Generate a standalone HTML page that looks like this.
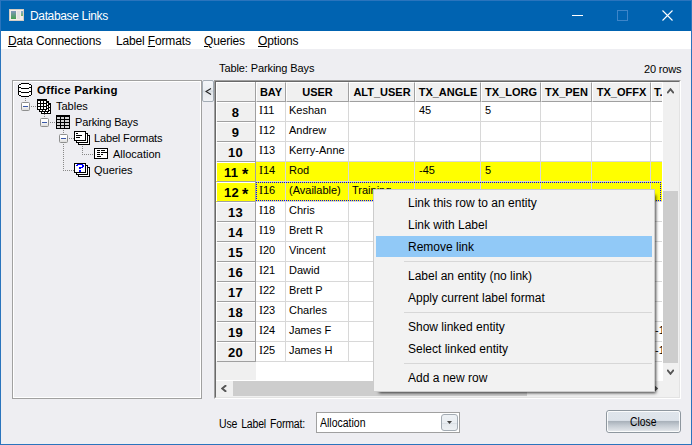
<!DOCTYPE html>
<html><head><meta charset="utf-8">
<style>
*{margin:0;padding:0;box-sizing:border-box}
html,body{width:692px;height:445px;overflow:hidden;background:#eeeef2}
body{position:relative;font-family:"Liberation Sans",sans-serif;font-size:11px;color:#000}
div,span{position:absolute;white-space:nowrap}
.t11{font-size:11px;line-height:13px}
.t12{font-size:12px;line-height:15px}
.b{font-weight:bold}
u{position:static;text-decoration:underline;text-underline-offset:1px}
</style></head><body>

<div style="left:0;top:0;width:692px;height:31px;background:#0063b1"></div>
<div style="left:9px;top:9px;width:15px;height:12px;background:#f2eee9;border:1px solid #d5cdc4"></div>
<div style="left:11px;top:11px;width:5px;height:8px;background:linear-gradient(#8197bd,#44a04f)"></div>
<div style="left:17px;top:11px;width:3px;height:8px;background:#e2e2e2"></div>
<div style="left:21px;top:11px;width:2px;height:5px;background:linear-gradient(#8aa6d6,#74b864)"></div>
<div class="t12" style="left:30px;top:9px;color:#fff;letter-spacing:-0.35px">Database Links</div>
<div style="left:572px;top:15px;width:11px;height:1px;background:#fff"></div>
<div style="left:617px;top:10px;width:11px;height:11px;border:1px solid #3d85c9"></div>
<svg style="position:absolute;left:662px;top:10px" width="11" height="11"><path d="M0.5 0.5L10.5 10.5M10.5 0.5L0.5 10.5" stroke="#fff" stroke-width="1.1"/></svg>
<div style="left:1px;top:31px;width:690px;height:18px;background:#fff"></div>
<div class="t12" style="left:8px;top:34px;letter-spacing:-0.15px"><u>D</u>ata Connections</div>
<div class="t12" style="left:116px;top:34px;letter-spacing:-0.15px">Label <u>F</u>ormats</div>
<div class="t12" style="left:204px;top:34px;letter-spacing:-0.15px"><u>Q</u>ueries</div>
<div class="t12" style="left:258px;top:34px;letter-spacing:-0.15px"><u>O</u>ptions</div>
<div class="t11" style="left:219px;top:62px;letter-spacing:-0.1px">Table: Parking Bays</div>
<div class="t11" style="left:644px;top:63px;letter-spacing:-0.15px">20 rows</div>
<div style="left:12px;top:80px;width:190px;height:319px;border:1px solid #a0a0a0"></div>
<div style="left:13px;top:81px;width:188px;height:317px;border:1px solid #fff"></div>
<div style="left:25px;top:98px;width:1px;height:1px;background:#888"></div>
<div style="left:25px;top:100px;width:1px;height:1px;background:#888"></div>
<div style="left:31px;top:106px;width:1px;height:1px;background:#888"></div>
<div style="left:33px;top:106px;width:1px;height:1px;background:#888"></div>
<div style="left:35px;top:106px;width:1px;height:1px;background:#888"></div>
<div style="left:44px;top:114px;width:1px;height:1px;background:#888"></div>
<div style="left:44px;top:116px;width:1px;height:1px;background:#888"></div>
<div style="left:50px;top:122px;width:1px;height:1px;background:#888"></div>
<div style="left:52px;top:122px;width:1px;height:1px;background:#888"></div>
<div style="left:54px;top:122px;width:1px;height:1px;background:#888"></div>
<div style="left:63px;top:130px;width:1px;height:1px;background:#888"></div>
<div style="left:63px;top:132px;width:1px;height:1px;background:#888"></div>
<div style="left:63px;top:144px;width:1px;height:1px;background:#888"></div>
<div style="left:63px;top:146px;width:1px;height:1px;background:#888"></div>
<div style="left:63px;top:148px;width:1px;height:1px;background:#888"></div>
<div style="left:63px;top:150px;width:1px;height:1px;background:#888"></div>
<div style="left:63px;top:152px;width:1px;height:1px;background:#888"></div>
<div style="left:63px;top:154px;width:1px;height:1px;background:#888"></div>
<div style="left:63px;top:156px;width:1px;height:1px;background:#888"></div>
<div style="left:63px;top:158px;width:1px;height:1px;background:#888"></div>
<div style="left:63px;top:160px;width:1px;height:1px;background:#888"></div>
<div style="left:63px;top:162px;width:1px;height:1px;background:#888"></div>
<div style="left:63px;top:164px;width:1px;height:1px;background:#888"></div>
<div style="left:63px;top:166px;width:1px;height:1px;background:#888"></div>
<div style="left:63px;top:168px;width:1px;height:1px;background:#888"></div>
<div style="left:63px;top:170px;width:1px;height:1px;background:#888"></div>
<div style="left:69px;top:138px;width:1px;height:1px;background:#888"></div>
<div style="left:71px;top:138px;width:1px;height:1px;background:#888"></div>
<div style="left:73px;top:138px;width:1px;height:1px;background:#888"></div>
<div style="left:65px;top:170px;width:1px;height:1px;background:#888"></div>
<div style="left:67px;top:170px;width:1px;height:1px;background:#888"></div>
<div style="left:69px;top:170px;width:1px;height:1px;background:#888"></div>
<div style="left:71px;top:170px;width:1px;height:1px;background:#888"></div>
<div style="left:73px;top:170px;width:1px;height:1px;background:#888"></div>
<div style="left:82px;top:146px;width:1px;height:1px;background:#888"></div>
<div style="left:82px;top:148px;width:1px;height:1px;background:#888"></div>
<div style="left:82px;top:150px;width:1px;height:1px;background:#888"></div>
<div style="left:82px;top:152px;width:1px;height:1px;background:#888"></div>
<div style="left:82px;top:154px;width:1px;height:1px;background:#888"></div>
<div style="left:84px;top:154px;width:1px;height:1px;background:#888"></div>
<div style="left:86px;top:154px;width:1px;height:1px;background:#888"></div>
<div style="left:88px;top:154px;width:1px;height:1px;background:#888"></div>
<div style="left:90px;top:154px;width:1px;height:1px;background:#888"></div>
<div style="left:92px;top:154px;width:1px;height:1px;background:#888"></div>
<div style="left:21px;top:102px;width:9px;height:9px;border:1px solid #8e8f8f;border-radius:1.5px;background:linear-gradient(#fff 30%,#ececec 70%,#dcdcdc)"></div>
<div style="left:23px;top:106px;width:5px;height:1px;background:#3a58a8"></div>
<div style="left:40px;top:118px;width:9px;height:9px;border:1px solid #8e8f8f;border-radius:1.5px;background:linear-gradient(#fff 30%,#ececec 70%,#dcdcdc)"></div>
<div style="left:42px;top:122px;width:5px;height:1px;background:#3a58a8"></div>
<div style="left:59px;top:134px;width:9px;height:9px;border:1px solid #8e8f8f;border-radius:1.5px;background:linear-gradient(#fff 30%,#ececec 70%,#dcdcdc)"></div>
<div style="left:61px;top:138px;width:5px;height:1px;background:#3a58a8"></div>
<svg style="position:absolute;left:18px;top:83px" width="14" height="14" shape-rendering="crispEdges"><rect x="1" y="1" width="12" height="12" fill="#fff"/><rect x="3" y="0" width="8" height="14" fill="#fff"/><rect x="3" y="0" width="8" height="1" fill="#000"/><rect x="1" y="1" width="2" height="1" fill="#000"/><rect x="11" y="1" width="2" height="1" fill="#000"/><rect x="0" y="2" width="1" height="10" fill="#000"/><rect x="13" y="2" width="1" height="10" fill="#000"/><rect x="1" y="4" width="2" height="1" fill="#000"/><rect x="11" y="4" width="2" height="1" fill="#000"/><rect x="3" y="5" width="8" height="1" fill="#000"/><rect x="1" y="8" width="2" height="1" fill="#000"/><rect x="11" y="8" width="2" height="1" fill="#000"/><rect x="3" y="9" width="8" height="1" fill="#000"/><rect x="1" y="12" width="2" height="1" fill="#000"/><rect x="11" y="12" width="2" height="1" fill="#000"/><rect x="3" y="13" width="8" height="1" fill="#000"/></svg>
<svg style="position:absolute;left:37px;top:99px" width="14" height="15" shape-rendering="crispEdges"><rect x="4" y="4" width="10" height="11" fill="#000"/><rect x="5" y="6" width="2" height="2" fill="#fff"/><rect x="5" y="9" width="2" height="2" fill="#fff"/><rect x="5" y="12" width="2" height="2" fill="#fff"/><rect x="8" y="6" width="2" height="2" fill="#fff"/><rect x="8" y="9" width="2" height="2" fill="#fff"/><rect x="8" y="12" width="2" height="2" fill="#fff"/><rect x="11" y="6" width="2" height="2" fill="#fff"/><rect x="11" y="9" width="2" height="2" fill="#fff"/><rect x="11" y="12" width="2" height="2" fill="#fff"/><rect x="2" y="2" width="10" height="11" fill="#000"/><rect x="3" y="4" width="2" height="2" fill="#fff"/><rect x="3" y="7" width="2" height="2" fill="#fff"/><rect x="3" y="10" width="2" height="2" fill="#fff"/><rect x="6" y="4" width="2" height="2" fill="#fff"/><rect x="6" y="7" width="2" height="2" fill="#fff"/><rect x="6" y="10" width="2" height="2" fill="#fff"/><rect x="9" y="4" width="2" height="2" fill="#fff"/><rect x="9" y="7" width="2" height="2" fill="#fff"/><rect x="9" y="10" width="2" height="2" fill="#fff"/><rect x="0" y="0" width="10" height="11" fill="#000"/><rect x="1" y="2" width="2" height="2" fill="#fff"/><rect x="1" y="5" width="2" height="2" fill="#fff"/><rect x="1" y="8" width="2" height="2" fill="#fff"/><rect x="4" y="2" width="2" height="2" fill="#fff"/><rect x="4" y="5" width="2" height="2" fill="#fff"/><rect x="4" y="8" width="2" height="2" fill="#fff"/><rect x="7" y="2" width="2" height="2" fill="#fff"/><rect x="7" y="5" width="2" height="2" fill="#fff"/><rect x="7" y="8" width="2" height="2" fill="#fff"/></svg>
<svg style="position:absolute;left:56px;top:115px" width="14" height="14" shape-rendering="crispEdges"><rect x="0" y="0" width="14" height="14" fill="#000"/><rect x="1" y="2" width="3" height="2" fill="#d4d4d4"/><rect x="1" y="5" width="3" height="2" fill="#d4d4d4"/><rect x="1" y="8" width="3" height="2" fill="#d4d4d4"/><rect x="1" y="11" width="3" height="2" fill="#d4d4d4"/><rect x="5" y="2" width="3" height="2" fill="#d4d4d4"/><rect x="5" y="5" width="3" height="2" fill="#d4d4d4"/><rect x="5" y="8" width="3" height="2" fill="#d4d4d4"/><rect x="5" y="11" width="3" height="2" fill="#d4d4d4"/><rect x="9" y="2" width="4" height="2" fill="#d4d4d4"/><rect x="9" y="5" width="4" height="2" fill="#d4d4d4"/><rect x="9" y="8" width="4" height="2" fill="#d4d4d4"/><rect x="9" y="11" width="4" height="2" fill="#d4d4d4"/></svg>
<svg style="position:absolute;left:74px;top:131px" width="16" height="14" shape-rendering="crispEdges"><rect x="4" y="4" width="12" height="10" fill="#000"/><rect x="5" y="5" width="10" height="8" fill="#fff"/><rect x="2" y="2" width="12" height="10" fill="#000"/><rect x="3" y="3" width="10" height="8" fill="#fff"/><rect x="0" y="0" width="12" height="10" fill="#000"/><rect x="1" y="1" width="10" height="8" fill="#fff"/><rect x="2" y="2" width="2" height="1" fill="#000"/><rect x="2" y="4" width="6" height="1" fill="#000"/><rect x="2" y="6" width="4" height="1" fill="#000"/></svg>
<svg style="position:absolute;left:74px;top:163px" width="16" height="14" shape-rendering="crispEdges"><rect x="4" y="4" width="12" height="10" fill="#000"/><rect x="5" y="5" width="10" height="8" fill="#fff"/><rect x="2" y="2" width="12" height="10" fill="#000"/><rect x="3" y="3" width="10" height="8" fill="#fff"/><rect x="0" y="0" width="12" height="10" fill="#000"/><rect x="1" y="1" width="10" height="8" fill="#fff"/><rect x="3" y="1" width="6" height="1" fill="#0000ff"/><rect x="2" y="2" width="2" height="1" fill="#0000ff"/><rect x="8" y="2" width="2" height="1" fill="#0000ff"/><rect x="8" y="3" width="2" height="1" fill="#0000ff"/><rect x="5" y="4" width="4" height="1" fill="#0000ff"/><rect x="5" y="5" width="2" height="1" fill="#0000ff"/><rect x="5" y="7" width="2" height="2" fill="#0000ff"/></svg>
<svg style="position:absolute;left:94px;top:148px" width="14" height="11" shape-rendering="crispEdges"><rect x="0" y="0" width="14" height="11" fill="#000"/><rect x="1" y="1" width="12" height="9" fill="#fff"/><rect x="3" y="2" width="3" height="1" fill="#000"/><rect x="7" y="2" width="4" height="1" fill="#000"/><rect x="3" y="4" width="3" height="1" fill="#000"/><rect x="7" y="4" width="6" height="1" fill="#000"/><rect x="3" y="6" width="3" height="1" fill="#000"/><rect x="7" y="6" width="2" height="1" fill="#000"/><rect x="3" y="8" width="4" height="1" fill="#000"/></svg>
<div class="t11 b" style="left:37px;top:84px;font-size:11.5px;letter-spacing:0.2px">Office Parking</div>
<div class="t11" style="left:56px;top:100px;letter-spacing:0px">Tables</div>
<div class="t11" style="left:75px;top:116px;letter-spacing:-0.15px">Parking Bays</div>
<div class="t11" style="left:94px;top:132px;letter-spacing:-0.15px">Label Formats</div>
<div class="t11" style="left:113px;top:148px;letter-spacing:0px">Allocation</div>
<div class="t11" style="left:94px;top:164px;letter-spacing:0px">Queries</div>
<div style="left:202px;top:80px;width:12px;height:22px;border:1px solid #a3acb5;border-radius:2px;background:linear-gradient(#f4f6f9 0%,#eaeef2 44%,#d3d9df 50%,#e4e8ec 60%,#f0f2f5 100%)"></div>
<svg style="position:absolute;left:205px;top:88px" width="7" height="8"><path d="M6 0.5L1 3.5L6 6.5" fill="none" stroke="#222" stroke-width="1.1"/></svg>
<div style="left:214px;top:80px;width:467px;height:319px;background:#fff;border-top:1px solid #a0a0a0;border-left:1px solid #a0a0a0;border-right:1px solid #fff;border-bottom:1px solid #fff"></div>
<div style="left:215px;top:81px;width:465px;height:317px;border-top:1px solid #696969;border-left:1px solid #696969;border-right:1px solid #e3e3e3;border-bottom:1px solid #e3e3e3"></div>
<div style="left:216px;top:82px;width:40px;height:298px;background:#f0f0f0"></div>
<div style="left:216px;top:82px;width:40px;height:20px;background:#f0f0f0"></div>
<div style="left:216px;top:82px;width:39px;height:1px;background:#fff"></div>
<div style="left:216px;top:82px;width:1px;height:19px;background:#fff"></div>
<div style="left:217px;top:101px;width:39px;height:1px;background:#a0a0a0"></div>
<div style="left:255px;top:82px;width:1px;height:20px;background:#a0a0a0"></div>
<div style="left:256px;top:82px;width:30px;height:20px;background:#f0f0f0;border-left:1px solid #fff;border-top:1px solid #fff;border-right:1px solid #a0a0a0;border-bottom:1px solid #a0a0a0;overflow:hidden"><div class="t11 b" style="left:0;top:3px;width:28px;text-align:center">BAY</div></div>
<div style="left:286px;top:82px;width:63px;height:20px;background:#f0f0f0;border-left:1px solid #fff;border-top:1px solid #fff;border-right:1px solid #a0a0a0;border-bottom:1px solid #a0a0a0;overflow:hidden"><div class="t11 b" style="left:0;top:3px;width:61px;text-align:center">USER</div></div>
<div style="left:349px;top:82px;width:66px;height:20px;background:#f0f0f0;border-left:1px solid #fff;border-top:1px solid #fff;border-right:1px solid #a0a0a0;border-bottom:1px solid #a0a0a0;overflow:hidden"><div class="t11 b" style="left:0;top:3px;width:64px;text-align:center">ALT_USER</div></div>
<div style="left:415px;top:82px;width:66px;height:20px;background:#f0f0f0;border-left:1px solid #fff;border-top:1px solid #fff;border-right:1px solid #a0a0a0;border-bottom:1px solid #a0a0a0;overflow:hidden"><div class="t11 b" style="left:0;top:3px;width:64px;text-align:center">TX_ANGLE</div></div>
<div style="left:481px;top:82px;width:60px;height:20px;background:#f0f0f0;border-left:1px solid #fff;border-top:1px solid #fff;border-right:1px solid #a0a0a0;border-bottom:1px solid #a0a0a0;overflow:hidden"><div class="t11 b" style="left:0;top:3px;width:58px;text-align:center">TX_LORG</div></div>
<div style="left:541px;top:82px;width:51px;height:20px;background:#f0f0f0;border-left:1px solid #fff;border-top:1px solid #fff;border-right:1px solid #a0a0a0;border-bottom:1px solid #a0a0a0;overflow:hidden"><div class="t11 b" style="left:0;top:3px;width:49px;text-align:center">TX_PEN</div></div>
<div style="left:592px;top:82px;width:59px;height:20px;background:#f0f0f0;border-left:1px solid #fff;border-top:1px solid #fff;border-right:1px solid #a0a0a0;border-bottom:1px solid #a0a0a0;overflow:hidden"><div class="t11 b" style="left:0;top:3px;width:57px;text-align:center">TX_OFFX</div></div>
<div style="left:651px;top:82px;width:11px;height:20px;background:#f0f0f0;border-left:1px solid #fff;border-top:1px solid #fff;border-bottom:1px solid #a0a0a0;overflow:hidden"><div class="t11 b" style="left:2px;top:3px">T.</div></div>
<div style="left:216px;top:102px;width:40px;height:20px;background:#f0f0f0"></div>
<div style="left:216px;top:102px;width:39px;height:1px;background:#fff"></div>
<div style="left:216px;top:102px;width:1px;height:19px;background:#fff"></div>
<div style="left:217px;top:121px;width:39px;height:1px;background:#a0a0a0"></div>
<div style="left:255px;top:102px;width:1px;height:20px;background:#a0a0a0"></div>
<div class="t11 b" style="left:216px;top:106px;width:39px;text-align:center;font-size:13px;letter-spacing:0.2px">8</div>
<div style="left:256px;top:102px;width:406px;height:20px;background:#fff"></div>
<div style="left:285px;top:102px;width:1px;height:20px;background:#d8d8d8"></div>
<div style="left:348px;top:102px;width:1px;height:20px;background:#d8d8d8"></div>
<div style="left:414px;top:102px;width:1px;height:20px;background:#d8d8d8"></div>
<div style="left:480px;top:102px;width:1px;height:20px;background:#d8d8d8"></div>
<div style="left:540px;top:102px;width:1px;height:20px;background:#d8d8d8"></div>
<div style="left:591px;top:102px;width:1px;height:20px;background:#d8d8d8"></div>
<div style="left:650px;top:102px;width:1px;height:20px;background:#d8d8d8"></div>
<div style="left:256px;top:121px;width:406px;height:1px;background:#d8d8d8"></div>
<div class="t11" style="left:259px;top:104px"><span style="position:static;font-family:'Liberation Serif';font-size:12px">I</span>11</div>
<div class="t11" style="left:289px;top:104px">Keshan</div>
<div class="t11" style="left:419px;top:104px">45</div>
<div class="t11" style="left:485px;top:104px">5</div>
<div style="left:216px;top:122px;width:40px;height:20px;background:#f0f0f0"></div>
<div style="left:216px;top:122px;width:39px;height:1px;background:#fff"></div>
<div style="left:216px;top:122px;width:1px;height:19px;background:#fff"></div>
<div style="left:217px;top:141px;width:39px;height:1px;background:#a0a0a0"></div>
<div style="left:255px;top:122px;width:1px;height:20px;background:#a0a0a0"></div>
<div class="t11 b" style="left:216px;top:126px;width:39px;text-align:center;font-size:13px;letter-spacing:0.2px">9</div>
<div style="left:256px;top:122px;width:406px;height:20px;background:#fff"></div>
<div style="left:285px;top:122px;width:1px;height:20px;background:#d8d8d8"></div>
<div style="left:348px;top:122px;width:1px;height:20px;background:#d8d8d8"></div>
<div style="left:414px;top:122px;width:1px;height:20px;background:#d8d8d8"></div>
<div style="left:480px;top:122px;width:1px;height:20px;background:#d8d8d8"></div>
<div style="left:540px;top:122px;width:1px;height:20px;background:#d8d8d8"></div>
<div style="left:591px;top:122px;width:1px;height:20px;background:#d8d8d8"></div>
<div style="left:650px;top:122px;width:1px;height:20px;background:#d8d8d8"></div>
<div style="left:256px;top:141px;width:406px;height:1px;background:#d8d8d8"></div>
<div class="t11" style="left:259px;top:124px"><span style="position:static;font-family:'Liberation Serif';font-size:12px">I</span>12</div>
<div class="t11" style="left:289px;top:124px">Andrew</div>
<div style="left:216px;top:142px;width:40px;height:20px;background:#f0f0f0"></div>
<div style="left:216px;top:142px;width:39px;height:1px;background:#fff"></div>
<div style="left:216px;top:142px;width:1px;height:19px;background:#fff"></div>
<div style="left:217px;top:161px;width:39px;height:1px;background:#a0a0a0"></div>
<div style="left:255px;top:142px;width:1px;height:20px;background:#a0a0a0"></div>
<div class="t11 b" style="left:216px;top:146px;width:39px;text-align:center;font-size:13px;letter-spacing:0.2px">10</div>
<div style="left:256px;top:142px;width:406px;height:20px;background:#fff"></div>
<div style="left:285px;top:142px;width:1px;height:20px;background:#d8d8d8"></div>
<div style="left:348px;top:142px;width:1px;height:20px;background:#d8d8d8"></div>
<div style="left:414px;top:142px;width:1px;height:20px;background:#d8d8d8"></div>
<div style="left:480px;top:142px;width:1px;height:20px;background:#d8d8d8"></div>
<div style="left:540px;top:142px;width:1px;height:20px;background:#d8d8d8"></div>
<div style="left:591px;top:142px;width:1px;height:20px;background:#d8d8d8"></div>
<div style="left:650px;top:142px;width:1px;height:20px;background:#d8d8d8"></div>
<div style="left:256px;top:161px;width:406px;height:1px;background:#d8d8d8"></div>
<div class="t11" style="left:259px;top:144px"><span style="position:static;font-family:'Liberation Serif';font-size:12px">I</span>13</div>
<div class="t11" style="left:289px;top:144px">Kerry-Anne</div>
<div style="left:216px;top:162px;width:40px;height:20px;background:#ffff00"></div>
<div style="left:216px;top:162px;width:39px;height:1px;background:#fff"></div>
<div style="left:216px;top:162px;width:1px;height:19px;background:#fff"></div>
<div style="left:217px;top:181px;width:39px;height:1px;background:#a0a0a0"></div>
<div style="left:255px;top:162px;width:1px;height:20px;background:#a0a0a0"></div>
<div class="t11 b" style="left:224px;top:166px;font-size:13px;letter-spacing:0.2px">11</div>
<div class="b" style="left:242px;top:167px;font-size:16px;line-height:15px">*</div>
<div style="left:256px;top:162px;width:406px;height:20px;background:#ffff00"></div>
<div style="left:285px;top:162px;width:1px;height:20px;background:#d8d8d8"></div>
<div style="left:348px;top:162px;width:1px;height:20px;background:#d8d8d8"></div>
<div style="left:414px;top:162px;width:1px;height:20px;background:#d8d8d8"></div>
<div style="left:480px;top:162px;width:1px;height:20px;background:#d8d8d8"></div>
<div style="left:540px;top:162px;width:1px;height:20px;background:#d8d8d8"></div>
<div style="left:591px;top:162px;width:1px;height:20px;background:#d8d8d8"></div>
<div style="left:650px;top:162px;width:1px;height:20px;background:#d8d8d8"></div>
<div style="left:256px;top:181px;width:406px;height:1px;background:#d8d8d8"></div>
<div class="t11" style="left:259px;top:164px"><span style="position:static;font-family:'Liberation Serif';font-size:12px">I</span>14</div>
<div class="t11" style="left:289px;top:164px">Rod</div>
<div class="t11" style="left:419px;top:164px">-45</div>
<div class="t11" style="left:485px;top:164px">5</div>
<div style="left:216px;top:182px;width:40px;height:20px;background:#ffff00"></div>
<div style="left:216px;top:182px;width:39px;height:1px;background:#fff"></div>
<div style="left:216px;top:182px;width:1px;height:19px;background:#fff"></div>
<div style="left:217px;top:201px;width:39px;height:1px;background:#a0a0a0"></div>
<div style="left:255px;top:182px;width:1px;height:20px;background:#a0a0a0"></div>
<div class="t11 b" style="left:224px;top:186px;font-size:13px;letter-spacing:0.2px">12</div>
<div class="b" style="left:242px;top:187px;font-size:16px;line-height:15px">*</div>
<div style="left:256px;top:182px;width:406px;height:20px;background:#ffff00"></div>
<div style="left:285px;top:182px;width:1px;height:20px;background:#d8d8d8"></div>
<div style="left:348px;top:182px;width:1px;height:20px;background:#d8d8d8"></div>
<div style="left:414px;top:182px;width:1px;height:20px;background:#d8d8d8"></div>
<div style="left:480px;top:182px;width:1px;height:20px;background:#d8d8d8"></div>
<div style="left:540px;top:182px;width:1px;height:20px;background:#d8d8d8"></div>
<div style="left:591px;top:182px;width:1px;height:20px;background:#d8d8d8"></div>
<div style="left:650px;top:182px;width:1px;height:20px;background:#d8d8d8"></div>
<div style="left:256px;top:201px;width:406px;height:1px;background:#d8d8d8"></div>
<div class="t11" style="left:259px;top:184px"><span style="position:static;font-family:'Liberation Serif';font-size:12px">I</span>16</div>
<div class="t11" style="left:289px;top:184px">(Available)</div>
<div class="t11" style="left:352px;top:184px">Training</div>
<div style="left:216px;top:202px;width:40px;height:20px;background:#f0f0f0"></div>
<div style="left:216px;top:202px;width:39px;height:1px;background:#fff"></div>
<div style="left:216px;top:202px;width:1px;height:19px;background:#fff"></div>
<div style="left:217px;top:221px;width:39px;height:1px;background:#a0a0a0"></div>
<div style="left:255px;top:202px;width:1px;height:20px;background:#a0a0a0"></div>
<div class="t11 b" style="left:216px;top:206px;width:39px;text-align:center;font-size:13px;letter-spacing:0.2px">13</div>
<div style="left:256px;top:202px;width:406px;height:20px;background:#fff"></div>
<div style="left:285px;top:202px;width:1px;height:20px;background:#d8d8d8"></div>
<div style="left:348px;top:202px;width:1px;height:20px;background:#d8d8d8"></div>
<div style="left:414px;top:202px;width:1px;height:20px;background:#d8d8d8"></div>
<div style="left:480px;top:202px;width:1px;height:20px;background:#d8d8d8"></div>
<div style="left:540px;top:202px;width:1px;height:20px;background:#d8d8d8"></div>
<div style="left:591px;top:202px;width:1px;height:20px;background:#d8d8d8"></div>
<div style="left:650px;top:202px;width:1px;height:20px;background:#d8d8d8"></div>
<div style="left:256px;top:221px;width:406px;height:1px;background:#d8d8d8"></div>
<div class="t11" style="left:259px;top:204px"><span style="position:static;font-family:'Liberation Serif';font-size:12px">I</span>18</div>
<div class="t11" style="left:289px;top:204px">Chris</div>
<div style="left:216px;top:222px;width:40px;height:20px;background:#f0f0f0"></div>
<div style="left:216px;top:222px;width:39px;height:1px;background:#fff"></div>
<div style="left:216px;top:222px;width:1px;height:19px;background:#fff"></div>
<div style="left:217px;top:241px;width:39px;height:1px;background:#a0a0a0"></div>
<div style="left:255px;top:222px;width:1px;height:20px;background:#a0a0a0"></div>
<div class="t11 b" style="left:216px;top:226px;width:39px;text-align:center;font-size:13px;letter-spacing:0.2px">14</div>
<div style="left:256px;top:222px;width:406px;height:20px;background:#fff"></div>
<div style="left:285px;top:222px;width:1px;height:20px;background:#d8d8d8"></div>
<div style="left:348px;top:222px;width:1px;height:20px;background:#d8d8d8"></div>
<div style="left:414px;top:222px;width:1px;height:20px;background:#d8d8d8"></div>
<div style="left:480px;top:222px;width:1px;height:20px;background:#d8d8d8"></div>
<div style="left:540px;top:222px;width:1px;height:20px;background:#d8d8d8"></div>
<div style="left:591px;top:222px;width:1px;height:20px;background:#d8d8d8"></div>
<div style="left:650px;top:222px;width:1px;height:20px;background:#d8d8d8"></div>
<div style="left:256px;top:241px;width:406px;height:1px;background:#d8d8d8"></div>
<div class="t11" style="left:259px;top:224px"><span style="position:static;font-family:'Liberation Serif';font-size:12px">I</span>19</div>
<div class="t11" style="left:289px;top:224px">Brett R</div>
<div style="left:216px;top:242px;width:40px;height:20px;background:#f0f0f0"></div>
<div style="left:216px;top:242px;width:39px;height:1px;background:#fff"></div>
<div style="left:216px;top:242px;width:1px;height:19px;background:#fff"></div>
<div style="left:217px;top:261px;width:39px;height:1px;background:#a0a0a0"></div>
<div style="left:255px;top:242px;width:1px;height:20px;background:#a0a0a0"></div>
<div class="t11 b" style="left:216px;top:246px;width:39px;text-align:center;font-size:13px;letter-spacing:0.2px">15</div>
<div style="left:256px;top:242px;width:406px;height:20px;background:#fff"></div>
<div style="left:285px;top:242px;width:1px;height:20px;background:#d8d8d8"></div>
<div style="left:348px;top:242px;width:1px;height:20px;background:#d8d8d8"></div>
<div style="left:414px;top:242px;width:1px;height:20px;background:#d8d8d8"></div>
<div style="left:480px;top:242px;width:1px;height:20px;background:#d8d8d8"></div>
<div style="left:540px;top:242px;width:1px;height:20px;background:#d8d8d8"></div>
<div style="left:591px;top:242px;width:1px;height:20px;background:#d8d8d8"></div>
<div style="left:650px;top:242px;width:1px;height:20px;background:#d8d8d8"></div>
<div style="left:256px;top:261px;width:406px;height:1px;background:#d8d8d8"></div>
<div class="t11" style="left:259px;top:244px"><span style="position:static;font-family:'Liberation Serif';font-size:12px">I</span>20</div>
<div class="t11" style="left:289px;top:244px">Vincent</div>
<div style="left:216px;top:262px;width:40px;height:20px;background:#f0f0f0"></div>
<div style="left:216px;top:262px;width:39px;height:1px;background:#fff"></div>
<div style="left:216px;top:262px;width:1px;height:19px;background:#fff"></div>
<div style="left:217px;top:281px;width:39px;height:1px;background:#a0a0a0"></div>
<div style="left:255px;top:262px;width:1px;height:20px;background:#a0a0a0"></div>
<div class="t11 b" style="left:216px;top:266px;width:39px;text-align:center;font-size:13px;letter-spacing:0.2px">16</div>
<div style="left:256px;top:262px;width:406px;height:20px;background:#fff"></div>
<div style="left:285px;top:262px;width:1px;height:20px;background:#d8d8d8"></div>
<div style="left:348px;top:262px;width:1px;height:20px;background:#d8d8d8"></div>
<div style="left:414px;top:262px;width:1px;height:20px;background:#d8d8d8"></div>
<div style="left:480px;top:262px;width:1px;height:20px;background:#d8d8d8"></div>
<div style="left:540px;top:262px;width:1px;height:20px;background:#d8d8d8"></div>
<div style="left:591px;top:262px;width:1px;height:20px;background:#d8d8d8"></div>
<div style="left:650px;top:262px;width:1px;height:20px;background:#d8d8d8"></div>
<div style="left:256px;top:281px;width:406px;height:1px;background:#d8d8d8"></div>
<div class="t11" style="left:259px;top:264px"><span style="position:static;font-family:'Liberation Serif';font-size:12px">I</span>21</div>
<div class="t11" style="left:289px;top:264px">Dawid</div>
<div style="left:216px;top:282px;width:40px;height:20px;background:#f0f0f0"></div>
<div style="left:216px;top:282px;width:39px;height:1px;background:#fff"></div>
<div style="left:216px;top:282px;width:1px;height:19px;background:#fff"></div>
<div style="left:217px;top:301px;width:39px;height:1px;background:#a0a0a0"></div>
<div style="left:255px;top:282px;width:1px;height:20px;background:#a0a0a0"></div>
<div class="t11 b" style="left:216px;top:286px;width:39px;text-align:center;font-size:13px;letter-spacing:0.2px">17</div>
<div style="left:256px;top:282px;width:406px;height:20px;background:#fff"></div>
<div style="left:285px;top:282px;width:1px;height:20px;background:#d8d8d8"></div>
<div style="left:348px;top:282px;width:1px;height:20px;background:#d8d8d8"></div>
<div style="left:414px;top:282px;width:1px;height:20px;background:#d8d8d8"></div>
<div style="left:480px;top:282px;width:1px;height:20px;background:#d8d8d8"></div>
<div style="left:540px;top:282px;width:1px;height:20px;background:#d8d8d8"></div>
<div style="left:591px;top:282px;width:1px;height:20px;background:#d8d8d8"></div>
<div style="left:650px;top:282px;width:1px;height:20px;background:#d8d8d8"></div>
<div style="left:256px;top:301px;width:406px;height:1px;background:#d8d8d8"></div>
<div class="t11" style="left:259px;top:284px"><span style="position:static;font-family:'Liberation Serif';font-size:12px">I</span>22</div>
<div class="t11" style="left:289px;top:284px">Brett P</div>
<div style="left:216px;top:302px;width:40px;height:20px;background:#f0f0f0"></div>
<div style="left:216px;top:302px;width:39px;height:1px;background:#fff"></div>
<div style="left:216px;top:302px;width:1px;height:19px;background:#fff"></div>
<div style="left:217px;top:321px;width:39px;height:1px;background:#a0a0a0"></div>
<div style="left:255px;top:302px;width:1px;height:20px;background:#a0a0a0"></div>
<div class="t11 b" style="left:216px;top:306px;width:39px;text-align:center;font-size:13px;letter-spacing:0.2px">18</div>
<div style="left:256px;top:302px;width:406px;height:20px;background:#fff"></div>
<div style="left:285px;top:302px;width:1px;height:20px;background:#d8d8d8"></div>
<div style="left:348px;top:302px;width:1px;height:20px;background:#d8d8d8"></div>
<div style="left:414px;top:302px;width:1px;height:20px;background:#d8d8d8"></div>
<div style="left:480px;top:302px;width:1px;height:20px;background:#d8d8d8"></div>
<div style="left:540px;top:302px;width:1px;height:20px;background:#d8d8d8"></div>
<div style="left:591px;top:302px;width:1px;height:20px;background:#d8d8d8"></div>
<div style="left:650px;top:302px;width:1px;height:20px;background:#d8d8d8"></div>
<div style="left:256px;top:321px;width:406px;height:1px;background:#d8d8d8"></div>
<div class="t11" style="left:259px;top:304px"><span style="position:static;font-family:'Liberation Serif';font-size:12px">I</span>23</div>
<div class="t11" style="left:289px;top:304px">Charles</div>
<div style="left:216px;top:322px;width:40px;height:20px;background:#f0f0f0"></div>
<div style="left:216px;top:322px;width:39px;height:1px;background:#fff"></div>
<div style="left:216px;top:322px;width:1px;height:19px;background:#fff"></div>
<div style="left:217px;top:341px;width:39px;height:1px;background:#a0a0a0"></div>
<div style="left:255px;top:322px;width:1px;height:20px;background:#a0a0a0"></div>
<div class="t11 b" style="left:216px;top:326px;width:39px;text-align:center;font-size:13px;letter-spacing:0.2px">19</div>
<div style="left:256px;top:322px;width:406px;height:20px;background:#fff"></div>
<div style="left:285px;top:322px;width:1px;height:20px;background:#d8d8d8"></div>
<div style="left:348px;top:322px;width:1px;height:20px;background:#d8d8d8"></div>
<div style="left:414px;top:322px;width:1px;height:20px;background:#d8d8d8"></div>
<div style="left:480px;top:322px;width:1px;height:20px;background:#d8d8d8"></div>
<div style="left:540px;top:322px;width:1px;height:20px;background:#d8d8d8"></div>
<div style="left:591px;top:322px;width:1px;height:20px;background:#d8d8d8"></div>
<div style="left:650px;top:322px;width:1px;height:20px;background:#d8d8d8"></div>
<div style="left:256px;top:341px;width:406px;height:1px;background:#d8d8d8"></div>
<div class="t11" style="left:259px;top:324px"><span style="position:static;font-family:'Liberation Serif';font-size:12px">I</span>24</div>
<div class="t11" style="left:289px;top:324px">James F</div>
<div style="left:216px;top:342px;width:40px;height:20px;background:#f0f0f0"></div>
<div style="left:216px;top:342px;width:39px;height:1px;background:#fff"></div>
<div style="left:216px;top:342px;width:1px;height:19px;background:#fff"></div>
<div style="left:217px;top:361px;width:39px;height:1px;background:#a0a0a0"></div>
<div style="left:255px;top:342px;width:1px;height:20px;background:#a0a0a0"></div>
<div class="t11 b" style="left:216px;top:346px;width:39px;text-align:center;font-size:13px;letter-spacing:0.2px">20</div>
<div style="left:256px;top:342px;width:406px;height:20px;background:#fff"></div>
<div style="left:285px;top:342px;width:1px;height:20px;background:#d8d8d8"></div>
<div style="left:348px;top:342px;width:1px;height:20px;background:#d8d8d8"></div>
<div style="left:414px;top:342px;width:1px;height:20px;background:#d8d8d8"></div>
<div style="left:480px;top:342px;width:1px;height:20px;background:#d8d8d8"></div>
<div style="left:540px;top:342px;width:1px;height:20px;background:#d8d8d8"></div>
<div style="left:591px;top:342px;width:1px;height:20px;background:#d8d8d8"></div>
<div style="left:650px;top:342px;width:1px;height:20px;background:#d8d8d8"></div>
<div style="left:256px;top:361px;width:406px;height:1px;background:#d8d8d8"></div>
<div class="t11" style="left:259px;top:344px"><span style="position:static;font-family:'Liberation Serif';font-size:12px">I</span>25</div>
<div class="t11" style="left:289px;top:344px">James H</div>
<div style="left:256px;top:182px;width:405px;height:19px;border:1px dotted #0000ff"></div>
<div class="t11" style="left:655px;top:324px;width:7px;overflow:hidden">-1</div>
<div class="t11" style="left:655px;top:344px;width:7px;overflow:hidden">-1</div>
<div style="left:663px;top:82px;width:16px;height:315px;background:#f0f0f0"></div>
<svg style="position:absolute;left:667px;top:88px" width="7" height="6"><path d="M0.2 5.2L3.5 1.2L6.8 5.2" fill="none" stroke="#555" stroke-width="1.9"/></svg>
<div style="left:663px;top:191px;width:15px;height:172px;background:#cdcdcd"></div>
<svg style="position:absolute;left:667px;top:369px" width="7" height="6"><path d="M0.2 0.8L3.5 4.8L6.8 0.8" fill="none" stroke="#555" stroke-width="1.9"/></svg>
<div style="left:216px;top:381px;width:447px;height:16px;background:#f0f0f0"></div>
<svg style="position:absolute;left:221px;top:385px" width="6" height="7"><path d="M5.2 0.2L1.2 3.5L5.2 6.8" fill="none" stroke="#555" stroke-width="1.9"/></svg>
<div style="left:233px;top:381px;width:294px;height:15px;background:#cdcdcd"></div>
<svg style="position:absolute;left:652px;top:385px" width="6" height="7"><path d="M0.8 0.2L4.8 3.5L0.8 6.8" fill="none" stroke="#555" stroke-width="1.9"/></svg>
<div style="left:379px;top:195px;width:275px;height:196px;box-shadow:1px 1px 3px 1px rgba(0,0,0,0.75)"></div>
<div style="left:373px;top:189px;width:282px;height:203px;background:#f2f2f2;border:1px solid #cccccc"></div>
<div style="left:376px;top:236px;width:276px;height:21px;background:#91c9f7"></div>
<div style="left:404px;top:261px;width:248px;height:1px;background:#d7d7d7"></div>
<div style="left:404px;top:312px;width:248px;height:1px;background:#d7d7d7"></div>
<div style="left:404px;top:363px;width:248px;height:1px;background:#d7d7d7"></div>
<div class="t12" style="left:408px;top:196px">Link this row to an entity</div>
<div class="t12" style="left:408px;top:218px">Link with Label</div>
<div class="t12" style="left:408px;top:240px">Remove link</div>
<div class="t12" style="left:408px;top:269px">Label an entity (no link)</div>
<div class="t12" style="left:408px;top:291px">Apply current label format</div>
<div class="t12" style="left:408px;top:320px">Show linked entity</div>
<div class="t12" style="left:408px;top:342px">Select linked entity</div>
<div class="t12" style="left:408px;top:371px">Add a new row</div>
<div class="t12" style="left:219px;top:417px;letter-spacing:-0.2px;word-spacing:1.5px;transform:scaleX(0.875);transform-origin:0 0">Use Label Format:</div>
<div style="left:316px;top:412px;width:144px;height:21px;background:#fff;border:1px solid #a0a0a0"></div>
<div class="t12" style="left:320px;top:416px;letter-spacing:0px;transform:scaleX(0.875);transform-origin:0 0">Allocation</div>
<div style="left:441px;top:414px;width:17px;height:17px;border:1px solid #a3abb3;border-radius:3px;background:linear-gradient(#eef1f5,#e9edf1 50%,#d5dbe1 54%,#e6eaee 62%,#edf0f3)"></div>
<svg style="position:absolute;left:447px;top:421px" width="5" height="3"><path d="M0 0H5L2.5 3Z" fill="#444"/></svg>
<div style="left:606px;top:410px;width:75px;height:23px;border:1px solid #8e979f;border-radius:3px;background:linear-gradient(#dfe5ec 0%,#dde3ea 45%,#a7b0b9 48%,#c5ccd3 70%,#e7eaee 100%)"></div>
<div style="left:607px;top:411px;width:73px;height:21px;border:1px solid rgba(255,255,255,0.85);border-radius:2px"></div>
<div class="t12" style="left:630px;top:415px;letter-spacing:0px;transform:scaleX(0.86);transform-origin:0 0">Close</div>
<div style="left:0;top:0;width:692px;height:445px;border:1px solid #2a74bd"></div>
</body></html>
